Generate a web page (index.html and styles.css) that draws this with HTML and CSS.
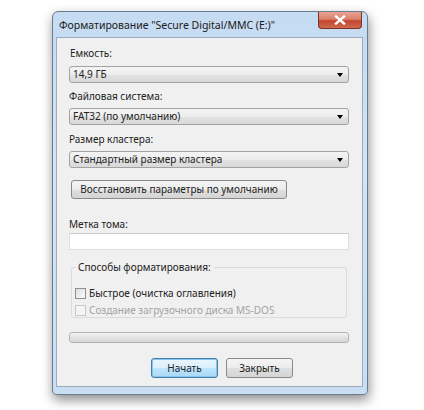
FILE: index.html
```html
<!DOCTYPE html>
<html lang="ru">
<head>
<meta charset="utf-8">
<title>Форматирование</title>
<link rel="stylesheet" href="styles.css">
</head>
<body>
<div class="window">
  <div class="titlebar">
    <span class="title">Форматирование "Secure Digital/MMC (E:)"</span>
    <span class="close"><svg width="12" height="10" viewBox="0 0 12 10"><path d="M2 1.5 L10 8.5 M10 1.5 L2 8.5" stroke="#fff" stroke-width="2.4" stroke-linecap="square"/></svg></span>
  </div>
  <div class="panel">
    <div class="label l1">Емкость:</div>
    <div class="combo c1"><span>14,9 ГБ</span><i class="arrow"></i></div>
    <div class="label l2">Файловая система:</div>
    <div class="combo"><span>FAT32 (по умолчанию)</span><i class="arrow"></i></div>
    <div class="label l2b">Размер кластера:</div>
    <div class="combo"><span>Стандартный размер кластера</span><i class="arrow"></i></div>
    <div class="btn restore">Восстановить параметры по умолчанию</div>
    <div class="label l3">Метка тома:</div>
    <div class="input"></div>
    <div class="group">
      <div class="legend">Способы форматирования:</div>
      <div class="check first"><i class="box"></i><span>Быстрое (очистка оглавления)</span></div>
      <div class="check disabled"><i class="box"></i><span>Создание загрузочного диска MS-DOS</span></div>
    </div>
    <div class="progress"></div>
    <div class="actions">
      <div class="btn default">Начать</div>
      <div class="btn">Закрыть</div>
    </div>
  </div>
</div>
</body>
</html>
```
FILE: styles.css
```css
html, body {
  margin: 0;
  background: #ffffff;
}
body {
  width: 424px;
  height: 410px;
  overflow: hidden;
  font-family: "Noto Sans", "Open Sans", sans-serif;
  font-size: 10px;
  color: #222222;
}
.window {
  margin: 11px 0 0 52px;
  width: 316px;
  height: 384px;
  box-sizing: border-box;
  border: 1px solid #6b7c8e;
  border-radius: 6px 6px 4px 4px;
  background: linear-gradient(180deg, #c5dbf1 0%, #d2e4f6 40%, #c9def3 100%);
  box-shadow: 1px 5px 12px rgba(0,0,0,0.45);
  padding: 0 4px 7px 3px;
  display: flex;
  flex-direction: column;
}
.titlebar {
  height: 25px;
  display: flex;
  align-items: flex-start;
  justify-content: space-between;
}
.title {
  margin: 6px 0 0 3px;
  font-size: 10.5px;
  color: #1a1a1a;
  line-height: 14px;
  white-space: nowrap;
}
.close {
  width: 44px;
  height: 17px;
  box-sizing: border-box;
  margin-right: 1px;
  border: 1px solid #7a3328;
  border-top: none;
  border-radius: 0 0 4px 4px;
  background: linear-gradient(180deg, #e8a493 0%, #d9806c 45%, #c2452f 55%, #cf6a4c 100%);
  display: flex;
  align-items: center;
  justify-content: center;
}
.panel {
  flex: 1;
  background: #f0f0f0;
  border: 1px solid #9aabbf;
  padding: 8px 13px 0 12px;
  display: flex;
  flex-direction: column;
}
.label {
  line-height: 15px;
  height: 15px;
  white-space: nowrap;
}
.l1 { margin: 0 0 0 1px; }
.l2 { margin: 6px 0 0 0; }
.l2b { margin: 7px 0 0 0; }
.l3 { margin: 18px 0 0 0; }
.combo {
  margin-top: 4px;
  height: 17px;
  box-sizing: border-box;
  border: 1px solid #a2a2a2;
  border-radius: 3px;
  background: linear-gradient(180deg, #f4f4f4 0%, #ececec 50%, #e2e2e2 51%, #d9d9d9 100%);
  display: flex;
  align-items: center;
  justify-content: space-between;
  padding: 0 5px 0 3px;
  line-height: 15px;
  white-space: nowrap;
}
.c1 { margin-top: 5px; }
.arrow {
  width: 0;
  height: 0;
  border-left: 3.5px solid transparent;
  border-right: 3.5px solid transparent;
  border-top: 4px solid #000;
}
.btn {
  height: 20px;
  box-sizing: border-box;
  border: 1px solid #8a8a8a;
  border-radius: 3px;
  background: linear-gradient(180deg, #f4f4f4 0%, #ececec 50%, #e0e0e0 51%, #d4d4d4 100%);
  display: flex;
  align-items: center;
  justify-content: center;
  line-height: 15px;
  white-space: nowrap;
}
.restore {
  margin: 12px 0 0 2px;
  width: 216px;
  height: 19px;
}
.input {
  margin-top: 1px;
  height: 17px;
  box-sizing: border-box;
  background: #fff;
  border: 1px solid #dcdfe3;
  border-top-color: #c8ccd2;
}
.group {
  margin: 17px 0 0 2px;
  width: 276px;
  height: 51px;
  box-sizing: border-box;
  border: 1px solid #d5dde3;
  border-radius: 3px;
  padding: 0 0 0 3px;
}
.legend {
  margin: -8px 0 0 1px;
  padding: 0 3px 0 2px;
  background: #f0f0f0;
  display: inline-block;
  line-height: 15px;
  vertical-align: top;
}
.check {
  display: flex;
  align-items: center;
  height: 17px;
  line-height: 15px;
  white-space: nowrap;
}
.first { margin-top: 3px; }
.box {
  width: 11px;
  height: 11px;
  box-sizing: border-box;
  border: 1px solid #8f8f8f;
  background: linear-gradient(135deg, #dcdcdc 0%, #f6f6f6 80%);
  margin: 0 3px 0 0;
}
.disabled { color: #a3a3a3; }
.disabled .box { border-color: #c7c7c7; background: #f4f4f4; }
.progress {
  margin-top: 14px;
  height: 11px;
  box-sizing: border-box;
  border: 1px solid #b3b3b3;
  border-radius: 3px;
  background: linear-gradient(180deg, #f5f5f5 0%, #e3e3e3 50%, #d6d6d6 100%);
}
.actions {
  margin-top: 15px;
  display: flex;
  gap: 8px;
  padding-left: 82px;
}
.actions .btn {
  width: 67px;
  height: 20px;
}
.default {
  border-color: #3c7fb1;
  background: linear-gradient(180deg, #eaf6fd 0%, #d9f0fc 50%, #bee6fd 51%, #a7d9f5 100%);
  box-shadow: inset 0 0 0 1px #8ec3e6;
}
```
